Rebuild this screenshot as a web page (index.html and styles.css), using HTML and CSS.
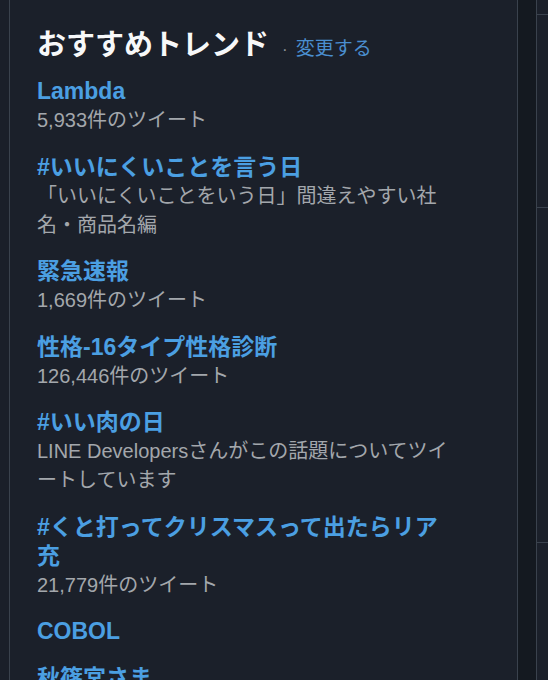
FILE: index.html
```html
<!DOCTYPE html>
<html lang="ja">
<head>
    <meta charset="UTF-8">
    <meta name="viewport" content="width=device-width, initial-scale=1.0">
    <title>おすすめトレンド</title>
    <link rel="stylesheet" href="styles.css">
</head>
<body>
    <div class="page">
        <div class="side-left"></div>

        <section class="trends">
            <h2 class="trends-head">おすすめトレンド<span class="dot">·</span><a class="change" href="#">変更する</a></h2>

            <ul class="trend-list">
                <li class="trend">
                    <a class="trend-name" href="#">Lambda</a>
                    <p class="trend-meta">5,933件のツイート</p>
                </li>
                <li class="trend">
                    <a class="trend-name" href="#">#いいにくいことを言う日</a>
                    <p class="trend-meta">「いいにくいことをいう日」間違えやすい社名・商品名編</p>
                </li>
                <li class="trend">
                    <a class="trend-name" href="#">緊急速報</a>
                    <p class="trend-meta">1,669件のツイート</p>
                </li>
                <li class="trend">
                    <a class="trend-name" href="#">性格-16タイプ性格診断</a>
                    <p class="trend-meta">126,446件のツイート</p>
                </li>
                <li class="trend">
                    <a class="trend-name" href="#">#いい肉の日</a>
                    <p class="trend-meta">LINE Developersさんがこの話題についてツイートしています</p>
                </li>
                <li class="trend">
                    <a class="trend-name" href="#">#くと打ってクリスマスって出たらリア充</a>
                    <p class="trend-meta">21,779件のツイート</p>
                </li>
                <li class="trend">
                    <a class="trend-name" href="#">COBOL</a>
                </li>
                <li class="trend">
                    <a class="trend-name" href="#">秋篠宮さま</a>
                </li>
            </ul>
        </section>

        <div class="gutter"></div>

        <aside class="side-right">
            <div class="slot slot-top"></div>
            <div class="slot slot-mid"></div>
            <div class="slot slot-low"></div>
        </aside>
    </div>
</body>
</html>
```

FILE: styles.css
```css
html, body {
    margin: 0;
    padding: 0;
    height: 100%;
    overflow: hidden;
}
body {
    background-color: #141920;
    font-family: "Liberation Sans", "Noto Sans CJK JP", sans-serif;
}
.page {
    display: flex;
    height: 680px;
}
.side-left {
    width: 9px;
    background-color: #1a1f29;
    border-right: 1px solid #3a424d;
}
.trends {
    width: 480px;
    padding: 27px 0 0 27px;
    background-color: #1b202a;
    border-right: 1px solid #3a424d;
}
.trends-head {
    margin: 0 0 9px;
    font-size: 29px;
    line-height: 36px;
    font-weight: 700;
    color: #f7f8f9;
}
.dot {
    margin: 0 8px 0 13px;
    font-size: 17px;
    font-weight: 400;
    color: #8a9098;
}
.change {
    font-size: 19px;
    font-weight: 400;
    color: #4a8ecf;
    text-decoration: none;
}
.trend-list {
    list-style: none;
    margin: 0;
    padding: 0;
    width: 418px;
    display: flex;
    flex-direction: column;
    gap: 17.5px;
}
.trend-name {
    display: block;
    font-size: 23px;
    line-height: 29px;
    font-weight: 700;
    color: #4b9fe2;
    text-decoration: none;
}
.trend-meta {
    margin: 0;
    font-size: 20px;
    line-height: 29px;
    color: #a3a7ac;
}
.gutter {
    width: 18px;
    background-color: #141920;
}
.side-right {
    flex: 1;
    background-color: #1b202a;
    border-left: 1px solid #3a424d;
}
.slot {
    border-bottom: 1px solid #3a424d;
}
.slot-top {
    height: 14px;
}
.slot-mid {
    height: 192px;
}
.slot-low {
    height: 334px;
}
```
